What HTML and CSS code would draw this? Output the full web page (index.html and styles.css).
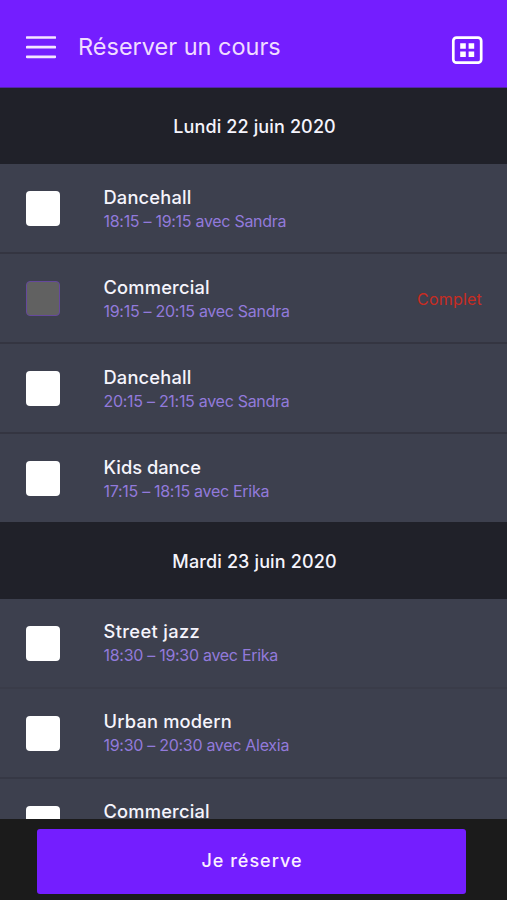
FILE: index.html
```html
<!DOCTYPE html>
<html lang="fr">
<head>
<meta charset="utf-8">
<title>Réserver un cours</title>
<link rel="stylesheet" href="styles.css">
</head>
<body>
<div class="app">
  <header class="topbar">
    <svg class="menu" width="30" height="24" viewBox="0 0 30 24"><path d="M1 2.5H29M1 12.2H29M1 21.8H29" stroke="#f3e5ff" stroke-width="2.7" stroke-linecap="round"/></svg>
    <h1>Réserver un cours</h1>
    <svg class="planning" width="32" height="28" viewBox="0 0 32 28"><rect x="2.3" y="1.6" width="27.9" height="25.1" rx="3.2" fill="none" stroke="#fff" stroke-width="2.7"/><path d="M9.2 7.3h5.6v5.4H9.2zM17.6 7.3h5.6v5.4h-5.6zM9.2 15.6h5.6V21H9.2zM17.6 15.6h5.6V21h-5.6z" fill="#fff"/></svg>
  </header>
  <main class="list">
    <h2 class="day">Lundi 22 juin 2020</h2>
    <ul>
      <li class="course"><span class="box"></span><div class="info"><strong>Dancehall</strong><span class="time">18:15 – 19:15 avec Sandra</span></div></li>
      <li class="course"><span class="box off"></span><div class="info"><strong>Commercial</strong><span class="time">19:15 – 20:15 avec Sandra</span></div><span class="full">Complet</span></li>
      <li class="course"><span class="box"></span><div class="info"><strong>Dancehall</strong><span class="time">20:15 – 21:15 avec Sandra</span></div></li>
      <li class="course last"><span class="box"></span><div class="info"><strong class="snug">Kids dance</strong><span class="time">17:15 – 18:15 avec Erika</span></div></li>
    </ul>
    <h2 class="day second">Mardi 23 juin 2020</h2>
    <ul class="upper">
      <li class="course faint"><span class="box"></span><div class="info"><strong class="wide">Street jazz</strong><span class="time">18:30 – 19:30 avec Erika</span></div></li>
      <li class="course thin"><span class="box"></span><div class="info"><strong>Urban modern</strong><span class="time">19:30 – 20:30 avec Alexia</span></div></li>
      <li class="course"><span class="box"></span><div class="info"><strong>Commercial</strong></div></li>
    </ul>
  </main>
  <footer class="actions"><button type="button">Je réserve</button></footer>
</div>
</body>
</html>
```
FILE: styles.css
```css
* { box-sizing: border-box; }
body { margin: 0; font-family: Inter, "Liberation Sans", sans-serif; color: #f5f4fc; background: #1b1b1b; }
.app { height: 900px; display: flex; flex-direction: column; overflow: hidden; }
.topbar { flex: none; height: 88px; padding: 7px 24px 0 26px; display: flex; align-items: center; background: #741eff; border-bottom: 1px solid #5325a8; }
.menu { flex: none; }
.topbar h1 { flex: 1; margin: 0 0 0 22px; font-size: 23.5px; line-height: 30px; font-weight: 400; color: #f0dcff; white-space: nowrap; }
.planning { margin-top: 6px; }
.list { flex: 1; min-height: 0; overflow: hidden; }
.day { height: 76px; margin: 0; padding: 2px 0 0 2px; display: flex; align-items: center; justify-content: center; font-size: 18px; font-weight: 550; line-height: 24px; letter-spacing: 0.14px; background: #202129; }
.day.second { height: 77px; }
ul { list-style: none; margin: 0; padding: 0; }
.course { height: 90px; padding: 0 25px 0 26px; display: flex; align-items: center; background: #3d404e; border-bottom: 2px solid #343541; }
.course.last { height: 88px; border-bottom: 0; }
.course.faint { border-bottom-color: #3a3c49; }
.course.thin { border-bottom-color: #363845; }
.box { flex: none; width: 34px; height: 35px; margin-top: 1px; border-radius: 4px; background: #fff; }
.box.off { background: #616161; border: 1px solid #65489c; }
.info { flex: 1; height: 48px; margin-left: 43.5px; padding-top: 1px; display: flex; flex-direction: column; white-space: nowrap; }
.upper .info { height: 50px; }
.info strong { font-size: 18.3px; font-weight: 550; line-height: 24px; letter-spacing: 0.18px; }
.info .snug { letter-spacing: 0; }
.info .wide { letter-spacing: 0.35px; }
.time { padding-top: 1px; font-size: 16px; line-height: 23px; letter-spacing: -0.29px; color: #927adb; }
.full { margin-top: 2px; font-size: 16px; line-height: 22px; letter-spacing: 0.2px; color: #c72c22; }
.actions { flex: none; height: 81px; padding: 10px 41px 6px 37px; display: flex; background: #1b1b1b; }
button { flex: 1; padding: 0 0 2px 1px; border: 0; border-radius: 3px; background: #741eff; color: #fbefff; font: 550 18px/24px Inter, "Liberation Sans", sans-serif; letter-spacing: 1px; }
```
